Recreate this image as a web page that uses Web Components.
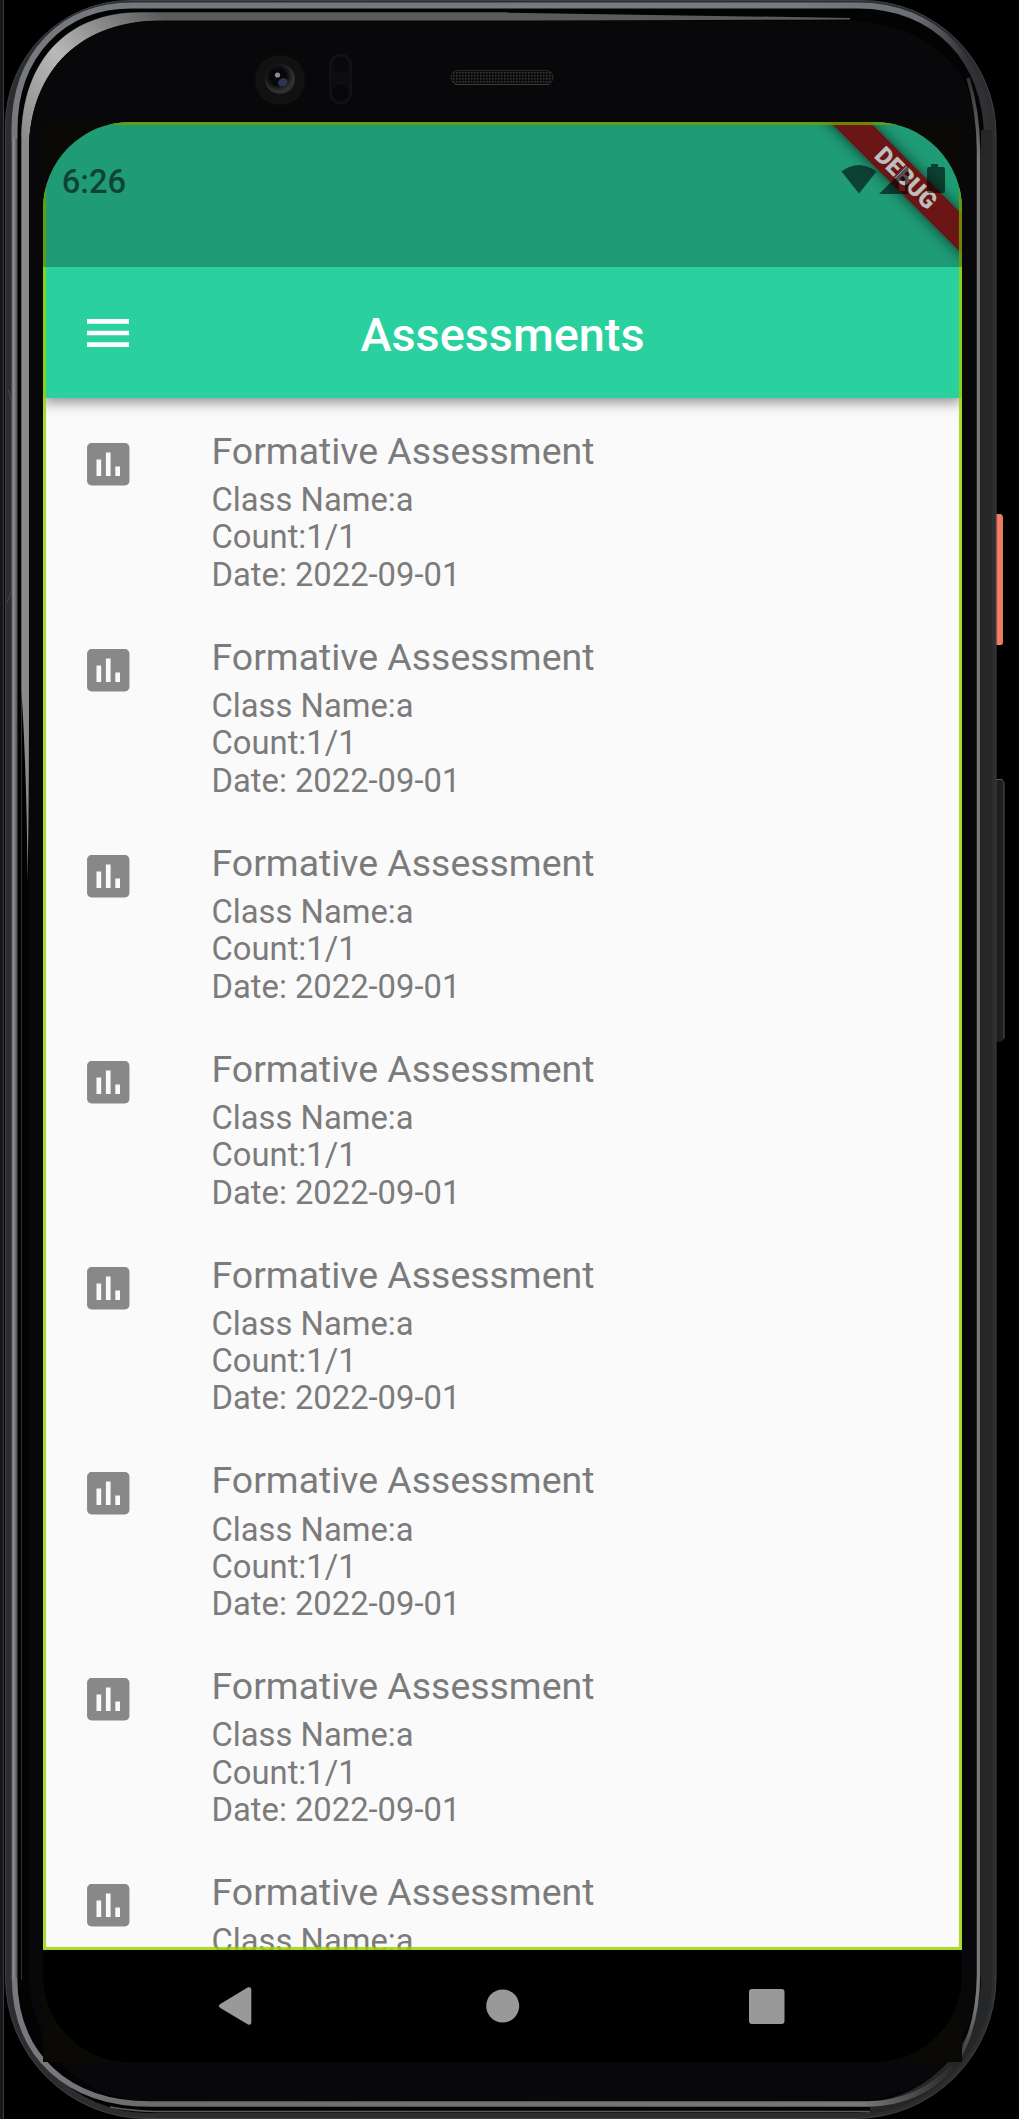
<!DOCTYPE html>
<html lang="en">
<head>
<meta charset="utf-8">
<title>Assessments</title>
<style>
html,body{margin:0;background:#000;overflow:hidden}
body{width:1019px;height:2119px;font-family:Roboto,"Liberation Sans",sans-serif}
</style>
</head>
<body>
<phone-device>
  <phone-screen>
    <status-bar slot="status" time="6:26"></status-bar>
    <app-bar slot="bar">Assessments</app-bar>
    <assessment-list slot="list" count="8"></assessment-list>
    <nav-bar slot="nav"></nav-bar>
  </phone-screen>
</phone-device>
<script>
const define = (name, html, setup) => {
  const t = document.createElement('template');
  t.innerHTML = html;
  customElements.define(name, class extends HTMLElement {
    constructor(){
      super();
      this.attachShadow({mode:'open'}).append(t.content.cloneNode(true));
    }
    connectedCallback(){ if (setup) setup(this, this.shadowRoot); }
  });
};

define('phone-device', `
<style>
:host{display:grid;width:1019px;height:2119px;overflow:hidden}
svg,.hold{grid-area:1/1}
svg{display:block}
.hold{padding:122px 57px 57px 43px;box-sizing:border-box;display:grid}
</style>
<svg width="1019" height="2119" viewBox="0 0 1019 2119" fill="none">
  <defs>
    <linearGradient id="metal" x1="0" y1="0" x2="1019" y2="0" gradientUnits="userSpaceOnUse">
      <stop offset="0" stop-color="#77797e"/><stop offset=".1" stop-color="#74787c"/><stop offset=".78" stop-color="#777b7f"/><stop offset=".9" stop-color="#6a6d72"/><stop offset=".95" stop-color="#303235"/><stop offset="1" stop-color="#2b2d2f"/>
    </linearGradient>
    <linearGradient id="rim" x1="11" y1="0" x2="17.500" y2="0" gradientUnits="userSpaceOnUse">
      <stop offset="0" stop-color="#55585c"/><stop offset=".4" stop-color="#8c8e93"/><stop offset="1" stop-color="#4c4d52"/>
    </linearGradient>
    <linearGradient id="shine" x1="22" y1="140" x2="160" y2="12" gradientUnits="userSpaceOnUse">
      <stop offset="0" stop-color="#8a8a8a"/><stop offset=".45" stop-color="#b8b8b8"/><stop offset="1" stop-color="#5b5b5b"/>
    </linearGradient>
    <linearGradient id="right" x1="0" y1="60" x2="0" y2="2065" gradientUnits="userSpaceOnUse">
      <stop offset="0" stop-color="#222"/><stop offset=".05" stop-color="#777"/><stop offset=".97" stop-color="#777"/><stop offset="1" stop-color="#333"/>
    </linearGradient>
    <linearGradient id="low" x1="0" y1="0" x2="960" y2="0" gradientUnits="userSpaceOnUse">
      <stop offset="0" stop-color="#77797e"/><stop offset=".05" stop-color="#77797e"/><stop offset=".14" stop-color="#6c6c6d"/><stop offset=".9" stop-color="#777"/><stop offset="1" stop-color="#222"/>
    </linearGradient>
    <linearGradient id="coral"><stop offset="0" stop-color="#d65c47"/><stop offset=".35" stop-color="#ef8066"/><stop offset="1" stop-color="#e87a62"/></linearGradient>
    <radialGradient id="lens" cx=".42" cy=".4"><stop offset=".3" stop-color="#050507"/><stop offset=".7" stop-color="#131315"/><stop offset="1" stop-color="#303033"/></radialGradient>
    <pattern id="mesh" width="3" height="3" patternUnits="userSpaceOnUse"><rect width="3" height="3" fill="#0b0b0b"/><rect width="1.5" height="1.5" fill="#3b3b3b"/></pattern>
  </defs>
  <rect width="3" height="2119" fill="#18181a"/>
  <rect x="3" width="1" height="2119" fill="#3a3b3d"/>
  <path d="M996 514h5q2 1 2 4v123q0 4-2 4h-5z" fill="url(#coral)"/>
  <path d="M996 779h6l2 3v257l-3 3h-5z" fill="#1d1e1f"/><path d="M996 779.5h6l2 3v256" stroke="#555"/>
  <path d="M130 .5H862A134 134 0 0 1 996 134V1978A141 141 0 0 1 855 2118.500H146A141 141 0 0 1 5.500 1978V125A125 125 0 0 1 130 .5Z" fill="#2b2d2f" stroke="#3f4142"/>
  <path d="M8 390q4 8 4 22v170q0 12-5 20" stroke="#47494b"/>
  <path d="M132 5.500H858C935 5.500 987 60 987 138V1970A134 134 0 0 1 855 2113H148A134 134 0 0 1 14.500 1978V130C14.500 55 62 5.500 132 5.500Z" fill="#030304"/>
  <path d="M14.500 140V130C14.500 55 62 5.500 132 5.500H858C935 5.500 987 60 987 138" stroke="url(#metal)" stroke-width="6"/>
  <path d="M11.500 138H17.500V1979H11.500Z" fill="url(#rim)"/>
  <path d="M986.500 130V1976A132 132 0 0 1 870 2108" stroke="#242628" stroke-width="11"/>
  <path d="M21.500 1980V140C21.500 62 66 12.500 140 12.500H508" stroke="#303133"/>
  <path d="M21.500 690V140C21.500 62 66 12.500 140 12.500H500L850 18L850 19.500Q500 20.500 460 20.500H160C83 20.500 30 68 29 150V690Q29 820 27.500 880Q27 780 21.500 690Z" fill="url(#shine)"/>
  <path d="M29 850V150C30 68 83 21 160 21H850C925 22 963 68 970 96Q977 120 977 150V1970C977 2055 925 2101 850 2101H150C80 2101 29 2050 29 1970Z" fill="#08080b"/>
  <path d="M968 78Q978 110 978.500 150V1975Q978 2025 958 2060" stroke="url(#right)" stroke-width="3.500"/>
  <path d="M14.500 1978C15 2056 68 2104 150 2104H868Q918 2103 952 2068" stroke="url(#low)" stroke-width="5.500"/>
  <path d="M110 2107Q135 2111.500 160 2111.500H870" stroke="#5c5c5c" stroke-width="1.500"/>
  <rect x="43" y="122" width="919" height="1940" fill="#0a0906"/>
  <circle cx="280" cy="80" r="25" fill="#111112"/><circle cx="280" cy="79" r="15" fill="url(#lens)"/><circle cx="278" cy="77" r="9" fill="#08080b"/>
  <ellipse cx="282.500" cy="82.500" rx="5" ry="3.800" fill="#343b62" opacity=".85" transform="rotate(-25 282 82)"/><circle cx="277.500" cy="75" r="2.600" fill="#8d8d8d"/>
  <rect x="330" y="54.500" width="21" height="49" rx="10.500" fill="#0d0d0f" stroke="#141416" stroke-width="1.500"/><circle cx="340.500" cy="65" r="9" fill="#09090b" stroke="#111113"/><circle cx="340.500" cy="92.500" r="9" fill="#070709" stroke="#111113"/>
  <rect x="451" y="70.500" width="102" height="14" rx="7" fill="url(#mesh)" stroke="#29292a"/><path d="M455 84.500H549" stroke="#3b3b3c"/>
</svg>
<div class="hold"><slot></slot></div>`);

define('phone-screen', `
<style>
:host{display:flex;flex-direction:column;position:relative;overflow:hidden;border-radius:87px;background:#000;color:#7b7b7b}
.app{height:1828px;display:flex;flex-direction:column;position:relative;overflow:hidden;background:#2ad19f}
.edge{position:absolute;inset:0;z-index:2;border:3px solid rgba(154,211,0,.82);pointer-events:none;box-shadow:inset 0 0 1px rgba(154,211,0,.7)}
.banner{position:absolute;left:713px;top:42px;width:300px;height:28px;line-height:28px;transform:rotate(45deg);background:#901d1d;color:#fff;text-align:center;font-size:23.9px;font-weight:900;z-index:1;box-shadow:0 0 14px rgba(0,0,0,.65)}
slot[name=list]{display:flex;flex:1;min-height:0}
</style>
<div class="app">
  <slot name="status"></slot><slot name="bar"></slot><slot name="list"></slot>
  <div class="banner">DEBUG</div>
  <div class="edge"></div>
</div>
<slot name="nav"></slot>`);

define('status-bar', `
<style>
:host{display:flex;justify-content:space-between;height:145px;box-sizing:border-box;padding:39px 17.500px 0 18.700px;position:relative;z-index:3;background:rgba(0,0,0,.255);color:rgba(0,0,0,.58);font-size:32.760px;font-weight:500;line-height:41px}
span{padding-top:1px}
svg{display:block;fill:currentColor}
</style>
<span></span>
<svg width="104" height="36" viewBox="0 0 104 36">
  <path d="M.5 10.500Q17.500-2.500 35.500 10.500L18 32.500Z"/>
  <path fill-rule="evenodd" d="M38 33L67.500 4V33ZM58 20V30H64V20Z"/>
  <path d="M90 3h7v3h5q2 0 2 2v22q0 2-2 2H88q-2 0-2-2V8q0-2 2-2h2z"/>
</svg>`, (el, r) => { r.querySelector('span').textContent = el.getAttribute('time'); });

define('app-bar', `
<style>
:host{display:grid;grid-template-columns:56px 1fr 56px;align-items:center;height:131px;box-sizing:border-box;padding:0 37.300px;background:#2ad19f;color:#fff;position:relative;z-index:1;box-shadow:0 4px 13px rgba(0,0,0,.45);clip-path:inset(0 0 -30px 0);flex:none}
.t{font-size:46.800px;font-weight:500;text-align:center;line-height:56px;padding-top:4px}
svg{display:block}
</style>
<svg width="56" height="56" viewBox="0 0 24 24" fill="#fff"><path d="M3 18h18v-2H3v2zm0-5h18v-2H3v2zm0-7v2h18V6H3z"/></svg>
<div class="t"><slot></slot></div>`);

define('assessment-list', `
<style>
:host{display:flex;flex-direction:column;flex:1;background:#fafafa;overflow:hidden}
</style>`, (el, r) => {
  const count = +el.getAttribute('count');
  for (let i = 0; i < count; i++) {
    const tile = document.createElement('assessment-tile');
    tile.innerHTML = '<span slot="title">Formative Assessment</span><span slot="class">Class Name:a</span>' +
      (i < count - 1 ? '<span slot="count">Count:1/1</span><span slot="date">Date: 2022-09-01</span>' : '');
    r.append(tile);
  }
});

define('assessment-tile', `
<style>
:host{display:flex;flex:none;height:205.920px;box-sizing:border-box;padding:30.900px 37.200px 0;gap:75px;color:#7b7b7b}
svg{display:block;flex:none;margin-top:7px}
.c{display:flex;flex-direction:column;font-size:32.760px;line-height:37.400px;white-space:nowrap;margin-left:-.2px}
.title{font-size:37.440px;line-height:44px;margin-bottom:9.100px}
</style>
<svg width="56.500" height="56.500" viewBox="0 0 24 24" fill="#888"><path d="M19 3H5c-1.100 0-2 .9-2 2v14c0 1.100.9 2 2 2h14c1.100 0 2-.9 2-2V5c0-1.100-.9-2-2-2zM9 17H7v-7h2v7zm4 0h-2V7h2v10zm4 0h-2v-4h2v4z"/></svg>
<div class="c"><div class="title"><slot name="title"></slot></div><div><slot name="class"></slot></div><div><slot name="count"></slot></div><div><slot name="date"></slot></div></div>`);

define('nav-bar', `
<style>
:host{display:flex;height:112px;justify-content:center;align-items:center;gap:208px;background:#000}
svg{display:block;fill:#999}
</style>
<svg width="56" height="56"><path d="M9.300 26L37 9.300Q40.300 8.500 40.300 11.500V44.500Q40.300 47.500 37 46.500L9.300 30Q6.500 28 9.300 26Z"/></svg>
<svg width="56" height="56"><circle cx="27.700" cy="28" r="16.500"/></svg>
<svg width="56" height="56"><rect x="10" y="11" width="35.500" height="35" rx="3"/></svg>`);
</script>
</body>
</html>
